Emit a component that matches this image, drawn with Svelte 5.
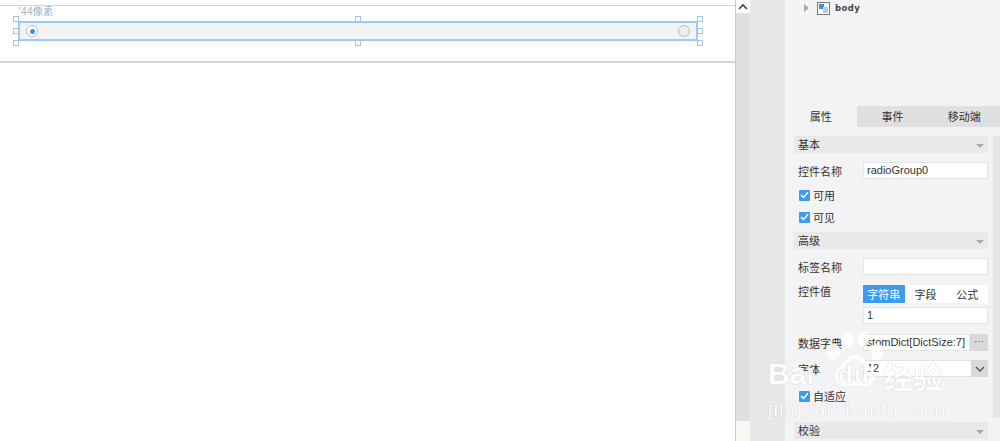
<script lang="ts">
	const handles = [
		['0%', '0%'], ['50%', '0%'], ['100%', '0%'],
		['0%', '50%'], ['100%', '50%'],
		['0%', '100%'], ['50%', '100%'], ['100%', '100%']
	];
</script>

{#snippet tick()}
	<span class="box"><svg width="9" height="8" viewBox="0 0 9 8"><path d="M1 4l2.5 2.5L8 1.2" fill="none" stroke="#fff" stroke-width="1.5" /></svg></span>
{/snippet}

<div class="app">
	<main class="canvas">
		<div class="sheet">
			<div class="hint">'44像素</div>
			<div class="group">
				<span class="radio on"></span>
				<span class="radio"></span>
				<div class="frame">
					{#each handles as [l, t]}
						<i class="handle" style="left: {l}; top: {t}"></i>
					{/each}
				</div>
			</div>
		</div>
	</main>

	<div class="scrollbar">
		<div class="up">
			<svg width="12" height="8" viewBox="0 0 12 8"><path d="M2 6l4-4 4 4" fill="none" stroke="#444" stroke-width="1.6" /></svg>
		</div>
		<div class="down"></div>
	</div>

	<div class="gutter"></div>

	<aside class="side">
		<div class="tree">
			<span class="arrow"></span>
			<svg class="node" width="13" height="13" viewBox="0 0 13 13">
				<rect x="0.5" y="0.5" width="12" height="12" fill="#fff" stroke="#777" />
				<rect x="2" y="2" width="5" height="5" fill="#3d8fdc" />
				<rect x="6" y="5" width="5" height="6" fill="#a9cdf0" />
			</svg>
			<span class="body-label">body</span>
		</div>

		<div class="tabs">
			<div class="tab active">属性</div>
			<div class="tab">事件</div>
			<div class="tab">移动端</div>
		</div>

		<div class="props">
			<div class="section">基本<span class="caret"></span></div>
			<div class="row name-row">
				<span class="label">控件名称</span>
				<div class="input">radioGroup0</div>
			</div>
			<div class="check first">{@render tick()}可用</div>
			<div class="check">{@render tick()}可见</div>

			<div class="section adv">高级<span class="caret"></span></div>
			<div class="row tag-row">
				<span class="label">标签名称</span>
				<div class="input"></div>
			</div>
			<div class="row value-row">
				<span class="label">控件值</span>
				<div class="value-col">
					<div class="seg">
						<span class="on">字符串</span>
						<span>字段</span>
						<span>公式</span>
					</div>
					<div class="input">1</div>
				</div>
			</div>
			<div class="row dict-row">
				<span class="label">数据字典</span>
				<div class="input clip"><span>CustomDict[DictSize:7]</span></div>
				<div class="more">···</div>
			</div>
			<div class="row font-row">
				<span class="label">字体</span>
				<div class="input select">12</div>
				<div class="drop">
					<svg width="10" height="6" viewBox="0 0 10 6"><path d="M1 1l4 4 4-4" fill="none" stroke="#555" stroke-width="1.3" /></svg>
				</div>
			</div>
			<div class="check fit">{@render tick()}自适应</div>
			<div class="section last">校验<span class="caret"></span></div>
		</div>
		<div class="side-track"></div>
	</aside>

	<div class="mark">
		<svg class="paw" width="60" height="62" viewBox="0 0 60 62">
			<g fill="#fff" stroke="#fff" opacity="0.85">
				<ellipse cx="9" cy="22" rx="6" ry="8" />
				<ellipse cx="23" cy="9" rx="5.5" ry="7" />
				<ellipse cx="38" cy="9" rx="5.5" ry="7" />
				<ellipse cx="52" cy="22" rx="6" ry="8" />
				<path fill="none" stroke-width="4" d="M30 27c-7 0-9 7-15 12-6 6-2 16 7 15 5-1 11-2 16 0 9 1 13-9 7-15-6-5-8-12-15-12z" />
			</g>
		</svg>
		<span class="bai">Bai</span>
		<span class="du">du</span>
		<span class="jy">经验</span>
		<span class="url">jingyan.baidu.com</span>
	</div>
</div>

<style>
	:global(body) {
		margin: 0;
	}
	.app {
		position: relative;
		display: flex;
		width: 1000px;
		height: 441px;
		overflow: hidden;
		font-family: 'Noto Sans CJK SC', 'Liberation Sans', sans-serif;
		font-size: 11px;
		color: #333;
		background: #e6e6e6;
	}
	.canvas {
		width: 735px;
		flex-shrink: 0;
		background: #fff;
		border-right: 1px solid #ccc;
		padding-top: 5px;
	}
	.sheet {
		height: 55px;
		border-top: 1px solid #d4d4d4;
		border-bottom: 2px solid #d4d4d4;
		padding-left: 18px;
	}
	.hint {
		height: 18px;
		margin-top: -3px;
		font-size: 10.5px;
		line-height: 16px;
		color: #9db4c8;
	}
	.group {
		position: relative;
		display: flex;
		align-items: center;
		justify-content: space-between;
		width: 680px;
		height: 20px;
		padding: 0 6px;
		box-sizing: border-box;
		background: #f3f3f5;
		border: 2px solid #9accf5;
	}
	.radio {
		width: 12px;
		height: 12px;
		box-sizing: border-box;
		border: 1px solid #bbb;
		border-radius: 50%;
		background: #eee;
	}
	.radio.on {
		position: relative;
		background: #fff;
	}
	.radio.on::after {
		content: '';
		position: absolute;
		left: 2.5px;
		top: 2.5px;
		width: 5px;
		height: 5px;
		border-radius: 50%;
		background: #3e8ef0;
	}
	.frame {
		position: absolute;
		inset: -4px;
		pointer-events: none;
	}
	.handle {
		position: absolute;
		width: 4px;
		height: 4px;
		margin: -3px 0 0 -3px;
		background: #fff;
		border: 1px solid #a3c4e4;
	}
	.scrollbar {
		display: flex;
		flex-direction: column;
		justify-content: space-between;
		width: 14px;
		flex-shrink: 0;
		background: #dfdfdf;
	}
	.up {
		display: flex;
		align-items: center;
		justify-content: center;
		height: 13px;
		background: #fff;
	}
	.down {
		height: 20px;
		background: #f7f7f3;
	}
	.gutter {
		width: 35px;
		flex-shrink: 0;
		background: #e7e7e7;
	}
	.side {
		position: relative;
		width: 215px;
		min-width: 0;
		flex-shrink: 0;
		background: #f3f3f5;
	}
	.tree {
		display: flex;
		align-items: center;
		height: 14px;
		padding-left: 19px;
		margin-top: 1px;
	}
	.arrow {
		width: 0;
		height: 0;
		border-left: 5px solid #aaa;
		border-top: 4px solid transparent;
		border-bottom: 4px solid transparent;
		margin-right: 8px;
	}
	.node {
		margin-right: 5px;
	}
	.body-label {
		font-family: 'DejaVu Sans', sans-serif;
		font-size: 8.5px;
		font-weight: 700;
		letter-spacing: 0.4px;
		color: #444;
	}
	.tabs {
		display: flex;
		height: 21px;
		margin-top: 91px;
		background: #dfe0e2;
	}
	.tab {
		flex: 1;
		text-align: center;
		line-height: 21px;
	}
	.tab.active {
		background: #f3f3f5;
	}
	.props {
		padding: 9px 12px 0 9px;
	}
	.section {
		position: relative;
		height: 17px;
		line-height: 16px;
		padding-left: 4px;
		background: #e9e9e9;
	}
	.caret {
		position: absolute;
		right: 4px;
		top: 8px;
		width: 0;
		height: 0;
		border-top: 4px solid #aaa;
		border-left: 4px solid transparent;
		border-right: 4px solid transparent;
	}
	.row {
		display: flex;
		align-items: center;
	}
	.label {
		width: 69px;
		padding-left: 4px;
		box-sizing: border-box;
		flex-shrink: 0;
	}
	.input {
		flex: 1;
		min-width: 0;
		height: 15px;
		padding-left: 3px;
		line-height: 15px;
		background: #fff;
		border: 1px solid #e4e4e4;
		font-family: 'Liberation Sans', sans-serif;
		font-size: 11px;
	}
	.name-row {
		margin-top: 9px;
	}
	.check {
		display: flex;
		align-items: center;
		height: 22px;
		padding-left: 5px;
	}
	.check.first {
		margin-top: 5px;
	}
	.box {
		display: flex;
		align-items: center;
		justify-content: center;
		width: 11px;
		height: 11px;
		margin-right: 3px;
		background: #3e9bf0;
		border-radius: 1px;
	}
	.adv {
		margin-top: 4px;
	}
	.tag-row {
		margin-top: 9px;
	}
	.value-row {
		align-items: flex-start;
		margin-top: 10px;
	}
	.value-row .label {
		margin-top: -2px;
	}
	.value-col {
		flex: 1;
		min-width: 0;
	}
	.seg {
		display: flex;
		height: 18px;
		background: #fff;
	}
	.seg span {
		flex: 1;
		text-align: center;
		line-height: 18px;
	}
	.seg .on {
		background: #3e9bf0;
		color: #fff;
	}
	.value-col .input {
		margin-top: 4px;
	}
	.dict-row {
		margin-top: 10px;
	}
	.clip {
		display: flex;
		justify-content: flex-end;
		overflow: hidden;
		white-space: nowrap;
		padding: 0 4px 0 0;
	}
	.clip span {
		flex-shrink: 0;
	}
	.more {
		width: 18px;
		height: 17px;
		line-height: 16px;
		text-align: center;
		font-family: 'Liberation Sans', sans-serif;
		font-size: 10px;
		background: #d9d9db;
		color: #666;
	}
	.font-row {
		margin-top: 9px;
	}
	.select {
		border-right: 0;
	}
	.drop {
		display: flex;
		align-items: center;
		justify-content: center;
		width: 17px;
		height: 17px;
		background: #d9d9db;
	}
	.fit {
		margin-top: 9px;
		height: 20px;
	}
	.last {
		margin-top: 16px;
	}
	.side-track {
		position: absolute;
		right: 0;
		top: 136px;
		width: 7px;
		height: 282px;
		background: #e6e6e6;
	}
	.mark {
		position: absolute;
		left: 755px;
		top: 325px;
		width: 245px;
		height: 116px;
		color: #fff;
		pointer-events: none;
		font-family: 'Liberation Sans', sans-serif;
	}
	.mark span {
		position: absolute;
		line-height: 1;
		opacity: 0.88;
		text-shadow: 0 0 1px #b8b8b8;
		white-space: nowrap;
	}
	.paw {
		position: absolute;
		left: 70px;
		top: 5px;
	}
	.bai {
		left: 13px;
		top: 34px;
		font-size: 30px;
		font-weight: 700;
	}
	.du {
		left: 83px;
		top: 38px;
		font-size: 24px;
		font-weight: 700;
		letter-spacing: 1.5px;
	}
	.jy {
		left: 128px;
		top: 35px;
		font-family: 'Noto Sans CJK SC', sans-serif;
		font-size: 30px;
		font-weight: 700;
	}
	.url {
		left: 13px;
		top: 74px;
		font-size: 20px;
		letter-spacing: 1px;
	}
</style>
